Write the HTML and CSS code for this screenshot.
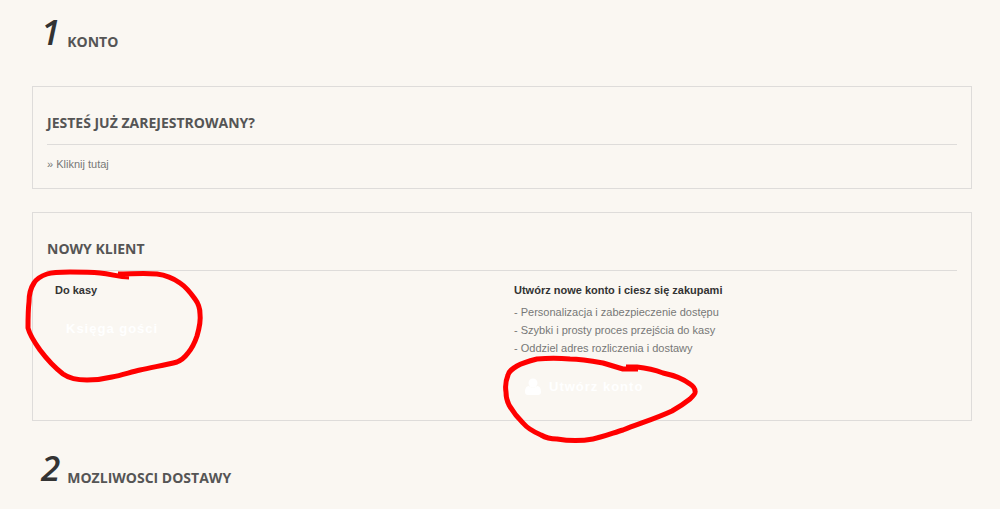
FILE: index.html
```html
<!DOCTYPE html>
<html lang="pl">
<head>
<meta charset="utf-8">
<title>Konto</title>
<link rel="stylesheet" href="styles.css">
</head>
<body>
<main class="checkout">
  <h1 class="step"><span class="step-number">1</span><span class="step-title">KONTO</span></h1>

  <section class="panel">
    <h2 class="panel-title">JESTEŚ JUŻ ZAREJESTROWANY?</h2>
    <a class="login-link" href="#">» Kliknij tutaj</a>
  </section>

  <section class="panel panel-new">
    <h2 class="panel-title">NOWY KLIENT</h2>
    <div class="columns">
      <div class="column">
        <h3 class="option-title">Do kasy</h3>
        <button class="button guest" type="button">Księga gości</button>
        <svg class="mark mark-guest" viewBox="20 260 190 130" width="190" height="130" aria-hidden="true">
          <path d="M129 276C118 276 112 273 100 272C90 271 80 271 70 271C60 271 53 271 47 273C41 275 37 277 34 282C30 288 29 294 29 301C28 309 28 318 28 327C30 335 35 342 40 349C46 357 54 366 63 373C70 378 79 379 87 379C96 379 104 378 112 376C122 374 131 371 140 369C153 366 166 364 177 361C182 359 185 356 188 352C193 346 195 341 197 335C199 328 201 320 200 313C200 307 198 302 195 298C190 291 186 286 180 282C173 277 165 274 157 273C144 272 131 273 118 273"/>
        </svg>
      </div>
      <div class="column">
        <h3 class="option-title">Utwórz nowe konto i ciesz się zakupami</h3>
        <ul class="benefits">
          <li>- Personalizacja i zabezpieczenie dostępu</li>
          <li>- Szybki i prosty proces przejścia do kasy</li>
          <li>- Oddziel adres rozliczenia i dostawy</li>
        </ul>
        <button class="button create" type="button">
          <svg class="user-icon" viewBox="0 0 16 18" width="16" height="18" aria-hidden="true">
            <circle cx="8" cy="5" r="4.5"/>
            <path d="M4 8C1 8 0 11 0 14C0 16 1 17 3 17H13C15 17 16 16 16 14C16 11 15 8 12 8C10 10 6 10 4 8Z"/>
          </svg>
          Utwórz konto
        </button>
        <svg class="mark mark-create" viewBox="500 350 200 95" width="200" height="95" aria-hidden="true">
          <path d="M638 368H623C616 366 610 364 603 362C592 360 581 358 570 358C559 357 548 357 537 358C529 360 522 362 517 365C512 368 509 370 508 374C506 379 505 385 506 391C506 396 507 400 509 404C513 411 517 416 523 422C528 428 534 431 541 434C546 437 551 438 557 438C569 440 582 440 593 438C603 436 613 432 623 429C641 422 657 417 672 410C679 406 685 402 690 398C693 395 696 392 695 390C695 387 693 385 690 383C682 377 673 374 663 372C655 369 646 367 637 366H626"/>
        </svg>
      </div>
    </div>
  </section>

  <h1 class="step"><span class="step-number">2</span><span class="step-title">MOZLIWOSCI DOSTAWY</span></h1>
</main>
</body>
</html>
```
FILE: styles.css
```css
body {
  margin: 0;
  background: #faf7f2;
  color: #777;
  font-family: "Liberation Sans", Arial, sans-serif;
  font-size: 11px;
  line-height: 18px;
}

.checkout {
  padding: 8px 28px 0 32px;
}

.step {
  display: flex;
  align-items: flex-end;
  gap: 7px;
  margin: 0;
  padding-left: 9px;
  color: #555;
  font: 700 14px/28px "Open Sans", sans-serif;
}

.step-number {
  color: #333;
  font-size: 35px;
  font-weight: 600;
  line-height: 48px;
  font-style: italic;
}

.panel {
  margin: 23px 0;
  padding: 24px 14px 15px;
  border: 1px solid #dedcda;
}

.step + .panel {
  margin-top: 30px;
}

.panel-title {
  margin: 0 0 10px;
  padding-bottom: 9px;
  border-bottom: 1px solid #dedcda;
  color: #555;
  font: 700 14px/24px "Open Sans", sans-serif;
}

.login-link {
  display: block;
  color: #777;
  text-decoration: none;
}

.columns {
  display: grid;
  grid-template-columns: 1fr 1fr;
  gap: 16px;
  padding-left: 8px;
}

.column {
  position: relative;
}

.option-title {
  margin: 0 0 4px;
  color: #333;
  font-size: 11px;
  line-height: 18px;
}

.benefits {
  margin: 0;
  padding: 0;
  list-style: none;
}

.button {
  display: flex;
  align-items: center;
  gap: 8px;
  height: 36px;
  padding: 0 11px;
  border: 0;
  background: none;
  color: #fff;
  font: bold 13px/18px "Liberation Sans", Arial, sans-serif;
  letter-spacing: 1px;
}

.guest {
  margin-top: 12px;
}

.create {
  margin-top: 12px;
}

.user-icon {
  fill: #fff;
}

.mark {
  position: absolute;
  fill: none;
  stroke: #f00;
  stroke-width: 5;
  stroke-linejoin: round;
  pointer-events: none;
}

.mark-guest {
  left: -35px;
  top: -20px;
}

.mark-create {
  left: -14px;
  top: 70px;
}
```
